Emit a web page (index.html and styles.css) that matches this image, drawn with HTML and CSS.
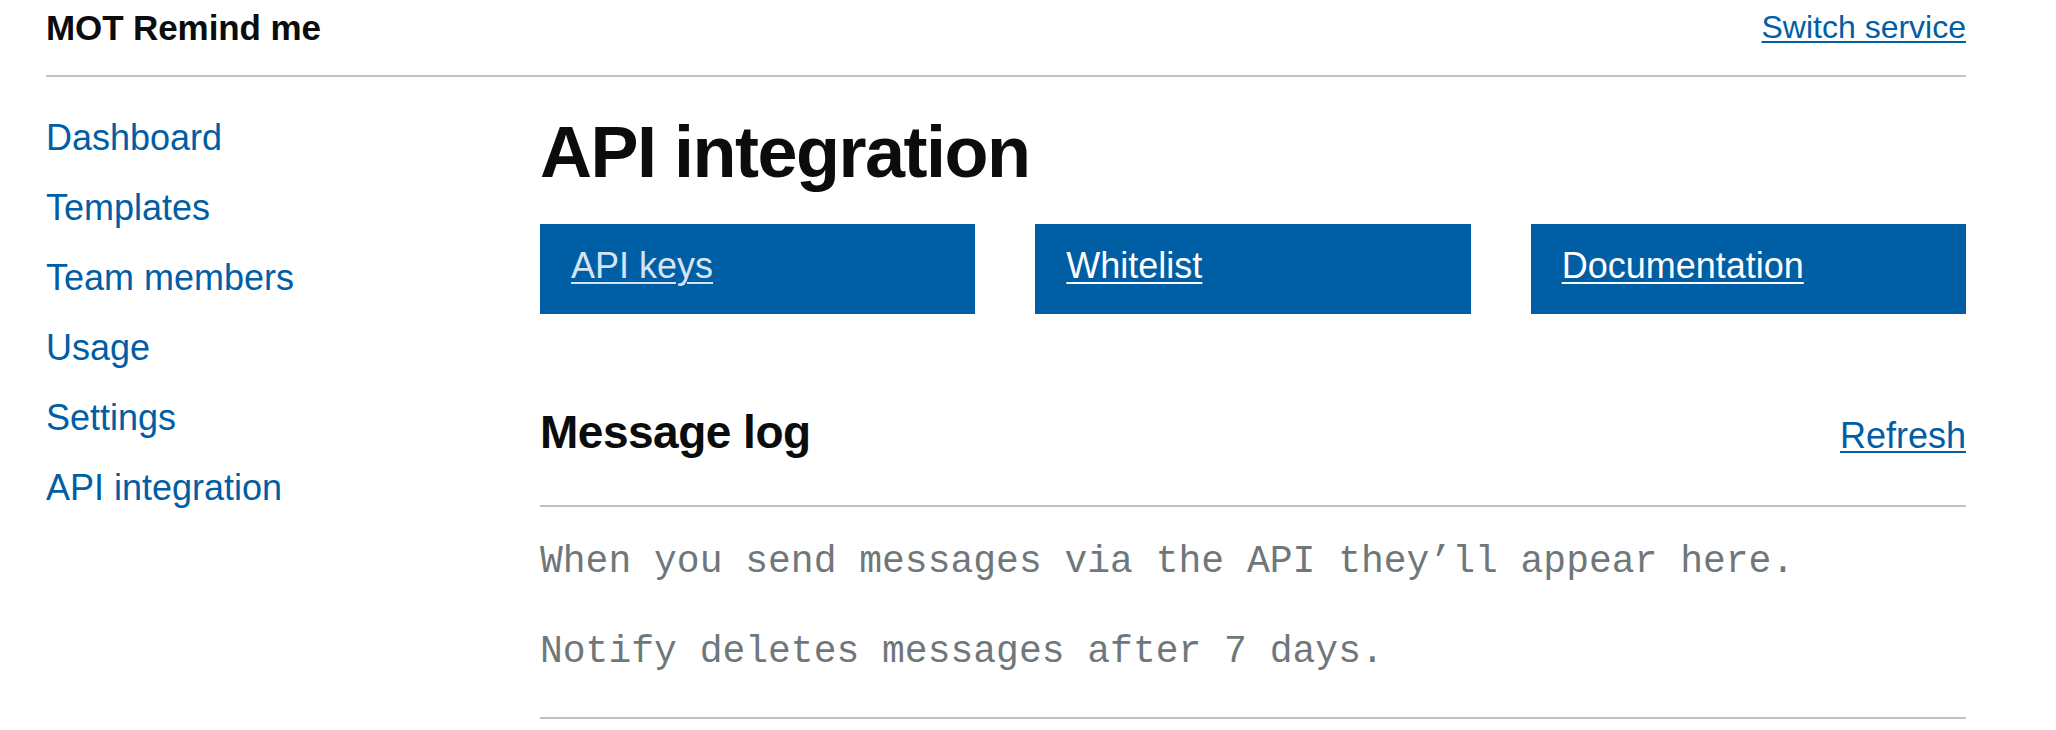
FILE: index.html
```html
<!DOCTYPE html>
<html lang="en">
<head>
<meta charset="utf-8">
<title>API integration – MOT Remind me</title>
<link rel="stylesheet" href="styles.css">
</head>
<body>
<div class="page">
  <header class="service-header">
    <span class="service-name">MOT Remind me</span>
    <a class="switch-link" href="#">Switch service</a>
  </header>
  <div class="layout">
    <nav class="side-nav">
      <a href="#">Dashboard</a>
      <a href="#">Templates</a>
      <a href="#">Team members</a>
      <a href="#">Usage</a>
      <a href="#">Settings</a>
      <a href="#">API integration</a>
    </nav>
    <main class="main">
      <h1 class="title">API integration</h1>
      <div class="tiles">
        <div class="tile"><a class="tile-link visited" href="#">API keys</a></div>
        <div class="tile"><a class="tile-link" href="#">Whitelist</a></div>
        <div class="tile"><a class="tile-link" href="#">Documentation</a></div>
      </div>
      <section class="log">
        <div class="log-head">
          <h2 class="log-title">Message log</h2>
          <a class="refresh" href="#">Refresh</a>
        </div>
        <div class="log-body">
          <p class="hint">When you send messages via the API they’ll appear here.</p>
          <p class="hint">Notify deletes messages after 7 days.</p>
        </div>
      </section>
    </main>
  </div>
</div>
</body>
</html>
```
FILE: styles.css
```css
* { box-sizing: border-box; }
html, body { margin: 0; padding: 0; background: #ffffff; }
body {
  font-family: "Liberation Sans", Arial, sans-serif;
  color: #0b0c0c;
}
.page {
  width: 1920px;
  margin-left: 46px;
}
.service-header {
  display: flex;
  justify-content: space-between;
  align-items: flex-start;
  height: 77px;
  padding-top: 3px;
  border-bottom: 2px solid #bfc1c3;
}
.service-name {
  font-weight: 700;
  font-size: 35px;
  line-height: 50px;
  letter-spacing: -0.1px;
}
.switch-link {
  margin-top: -1px;
  font-size: 32px;
  line-height: 50px;
  color: #005ea5;
  text-decoration: underline;
  text-decoration-thickness: 2px;
  text-underline-offset: 3px;
}
.layout {
  display: grid;
  grid-template-columns: 494px 1426px;
}
.side-nav {
  display: flex;
  flex-direction: column;
  padding-top: 26px;
}
.side-nav a {
  display: block;
  font-size: 36px;
  line-height: 70px;
  color: #005ea5;
  text-decoration: none;
}
.main { padding-top: 30px; }
.title {
  margin: 0;
  font-size: 72px;
  line-height: 90px;
  font-weight: 700;
  letter-spacing: -1.5px;
}
.tiles {
  margin-top: 27px;
  display: grid;
  grid-template-columns: repeat(3, 1fr);
  column-gap: 60px;
}
.tile {
  height: 90px;
  background: #005ea5;
  padding: 22px 0 0 31px;
}
.tile-link {
  font-size: 36px;
  line-height: 40px;
  color: #ffffff;
  text-decoration: underline;
  text-decoration-thickness: 2px;
  text-underline-offset: 4px;
}
.tile-link.visited { color: #d5e4f3; }
.log { margin-top: 88px; }
.log-head {
  display: flex;
  justify-content: space-between;
  align-items: baseline;
  padding-bottom: 39px;
  border-bottom: 2px solid #bfc1c3;
}
.log-title {
  margin: 0;
  font-size: 46px;
  line-height: 60px;
  font-weight: 700;
  letter-spacing: -0.5px;
}
.refresh {
  font-size: 36px;
  line-height: 60px;
  color: #005ea5;
  text-decoration: underline;
  text-decoration-thickness: 2px;
  text-underline-offset: 3px;
}
.log-body {
  padding: 30px 0 40px;
  border-bottom: 2px solid #bfc1c3;
}
.hint {
  margin: 0;
  font-family: "Liberation Mono", "Courier New", monospace;
  font-size: 38px;
  line-height: 50px;
  color: #6f777b;
}
.hint + .hint { margin-top: 40px; }
```
